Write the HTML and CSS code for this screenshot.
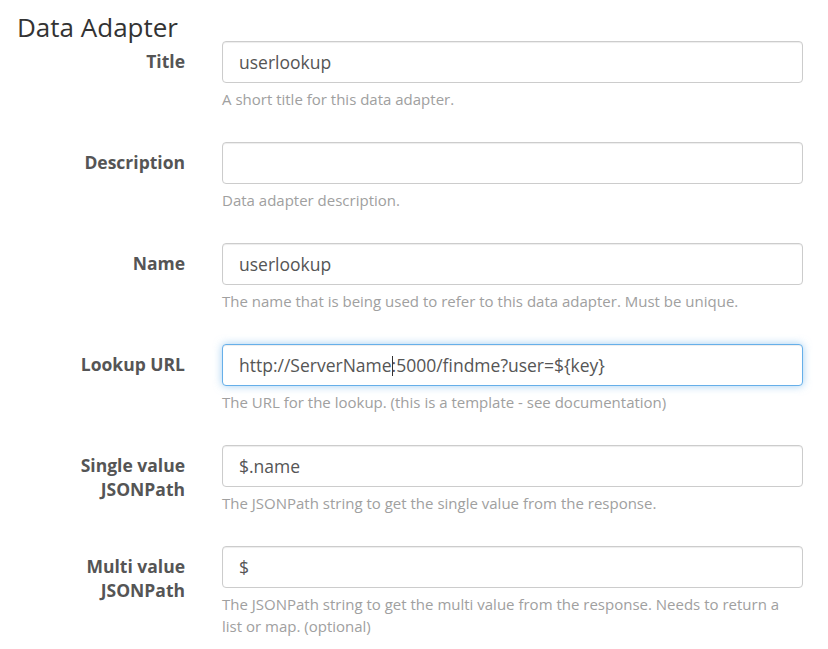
FILE: index.html
```html
<!DOCTYPE html>
<html lang="en">
<head>
<meta charset="utf-8">
<title>Data Adapter</title>
<link rel="stylesheet" href="styles.css">
</head>
<body>
<div class="page">
  <h2 class="heading">Data Adapter</h2>
  <form class="form">
    <div class="row">
      <label class="label" for="title">Title</label>
      <div class="field">
        <input class="input" id="title" type="text" value="userlookup">
        <p class="help">A short title for this data adapter.</p>
      </div>
    </div>
    <div class="row">
      <label class="label" for="desc">Description</label>
      <div class="field">
        <input class="input" id="desc" type="text" value="">
        <p class="help">Data adapter description.</p>
      </div>
    </div>
    <div class="row">
      <label class="label" for="name">Name</label>
      <div class="field">
        <input class="input" id="name" type="text" value="userlookup">
        <p class="help">The name that is being used to refer to this data adapter. Must be unique.</p>
      </div>
    </div>
    <div class="row">
      <label class="label">Lookup URL</label>
      <div class="field">
        <div class="input input-focus">http://ServerName<span class="caret"></span>:5000/findme?user=${key}</div>
        <p class="help">The URL for the lookup. (this is a template - see documentation)</p>
      </div>
    </div>
    <div class="row">
      <label class="label" for="single">Single value<br>JSONPath</label>
      <div class="field">
        <input class="input" id="single" type="text" value="$.name">
        <p class="help">The JSONPath string to get the single value from the response.</p>
      </div>
    </div>
    <div class="row">
      <label class="label" for="multi">Multi value<br>JSONPath</label>
      <div class="field">
        <input class="input" id="multi" type="text" value="$">
        <p class="help">The JSONPath string to get the multi value from the response. Needs to return a list or map. (optional)</p>
      </div>
    </div>
  </form>
</div>
</body>
</html>
```
FILE: styles.css
```css
html, body {
  margin: 0;
  padding: 0;
  background: #fff;
}
body {
  font-family: "Open Sans", "Liberation Sans", sans-serif;
  color: #555;
}
.page {
  padding: 14px 0 0 17px;
}
.heading {
  margin: 0 0 1px;
  font-size: 26px;
  font-weight: 400;
  line-height: 26px;
  color: #333;
}
.form {
  margin: 0;
}
.row {
  display: grid;
  grid-template-columns: 168px 581px;
  column-gap: 37px;
}
.label {
  text-align: right;
  font-size: 17.5px;
  font-weight: 700;
  line-height: 24px;
  padding-top: 8px;
  color: #555;
}
.field {
  display: flex;
  flex-direction: column;
}
.input {
  box-sizing: border-box;
  display: block;
  width: 581px;
  height: 42px;
  margin: 0;
  padding: 0 16px;
  border: 1px solid #ccc;
  border-radius: 4px;
  background: #fff;
  box-shadow: inset 0 1px 1px rgba(0, 0, 0, 0.075);
  font-family: "Open Sans", "Liberation Sans", sans-serif;
  font-size: 17.5px;
  line-height: 40px;
  color: #555;
  outline: none;
  white-space: nowrap;
}
.input-focus {
  border-color: #66afe9;
  box-shadow: inset 0 1px 1px rgba(0, 0, 0, 0.075), 0 0 8px rgba(102, 175, 233, 0.6);
}
.caret {
  display: inline-block;
  width: 1px;
  height: 20px;
  margin-right: -1px;
  background: #333;
  vertical-align: -4px;
}
.help {
  margin: 5px 0 32px;
  font-size: 15px;
  line-height: 22px;
  color: #a0a0a0;
}
```
